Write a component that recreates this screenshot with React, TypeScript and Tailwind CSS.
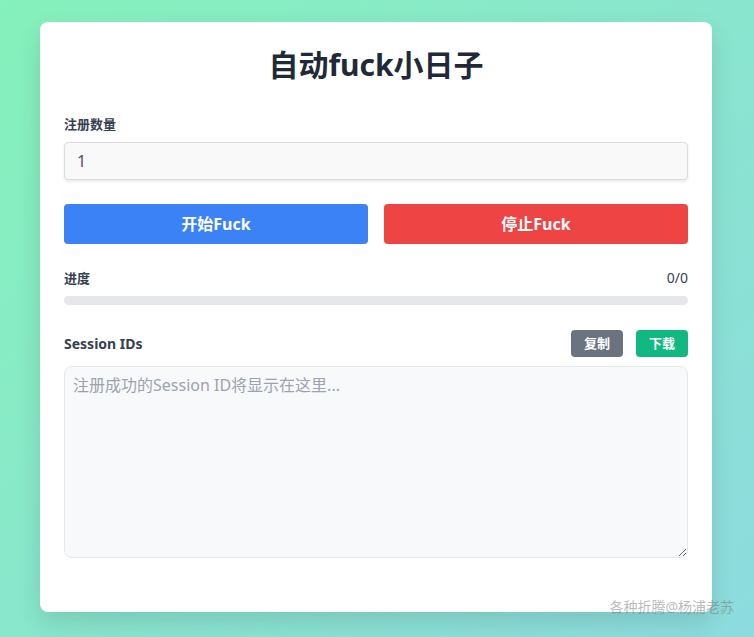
export default function App() {
  return (
    <div
      className="relative min-h-[637px] w-full overflow-hidden bg-[linear-gradient(135deg,#85f1bb_0%,#8ddbdf_100%)] pt-[22px]"
      style={{ fontFamily: '"Noto Sans", "Noto Sans CJK SC", sans-serif' }}
    >
      <div className="ml-[40px] w-[672px] rounded-[8px] bg-white px-6 pt-[20px] pb-[54px] shadow-[0_10px_25px_rgba(0,0,0,0.12)]">
        <h1 className="text-center text-[30px] leading-[46px] font-bold text-[#1f2937]">自动fuck小日子</h1>

        <div className="mt-[26px]">
          <label className="block text-[13px] leading-[20px] font-bold text-[#374151]">注册数量</label>
          <input
            type="number"
            defaultValue={1}
            className="mt-[8px] block h-[38px] w-full rounded-[4px] border border-[#dcdcdc] bg-[#f9f9f9] px-[12px] text-[16px] text-[#5b4a6e] shadow-[0_2px_3px_rgba(0,0,0,0.08)] outline-none [appearance:textfield]"
          />
        </div>

        <div className="mt-[24px] flex gap-4">
          <button className="h-[40px] flex-1 rounded-[4px] bg-[#3b82f6] text-[16px] font-bold text-white">开始Fuck</button>
          <button className="h-[40px] flex-1 rounded-[4px] bg-[#ef4444] text-[16px] font-bold text-white">停止Fuck</button>
        </div>

        <div className="mt-[24px]">
          <div className="flex items-center justify-between">
            <span className="text-[13px] leading-[20px] font-bold text-[#374151]">进度</span>
            <span className="text-[14px] leading-[20px] text-[#374151]">0/0</span>
          </div>
          <div className="mt-[8px] h-[9px] w-full rounded-full bg-[#e5e7eb]" />
        </div>

        <div className="mt-[25px]">
          <div className="flex items-center justify-between">
            <span className="text-[14px] font-bold text-[#374151]">Session IDs</span>
            <div className="flex gap-[13px]">
              <button className="h-[27px] w-[52px] rounded-[4px] bg-[#6b7280] text-[13px] font-bold text-white">复制</button>
              <button className="h-[27px] w-[52px] rounded-[4px] bg-[#10b981] text-[13px] font-bold text-white">下载</button>
            </div>
          </div>
          <textarea
            placeholder="注册成功的Session ID将显示在这里..."
            className="mt-[9px] block h-[192px] w-full rounded-[8px] border border-[#e5e7eb] bg-[#f8f9fa] px-[8px] py-[6px] text-[16px] leading-[24px] text-[#374151] outline-none placeholder:text-[#9ca3af]"
          />
        </div>
      </div>

      <div className="absolute right-[20px] bottom-[20px] text-[14px] text-[rgba(120,120,120,0.5)]">各种折腾@杨浦老苏</div>
    </div>
  );
}
